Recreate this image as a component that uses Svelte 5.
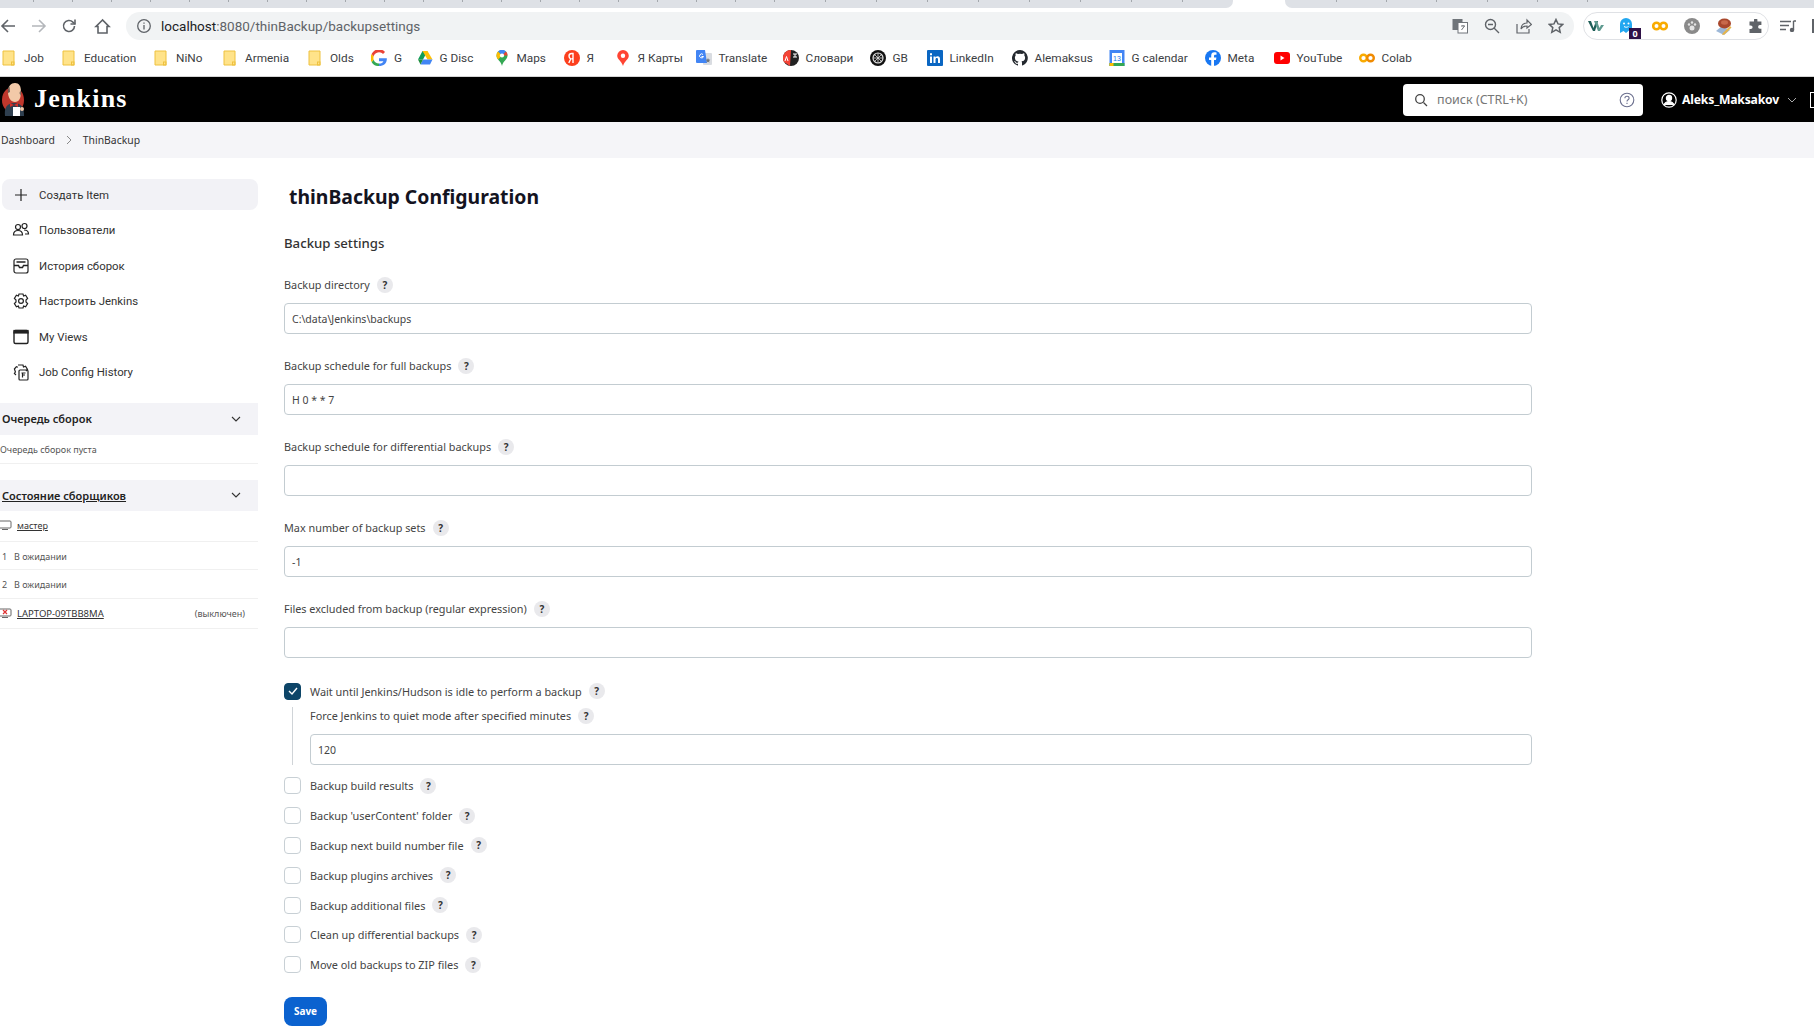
<script>
  const bookmarks = [
    { name: "Job", icon: "folder", w: 60 },
    { name: "Education", icon: "folder", w: 92 },
    { name: "NiNo", icon: "folder", w: 69 },
    { name: "Armenia", icon: "folder", w: 85 },
    { name: "Olds", icon: "folder", w: 64 },
    { name: "G", icon: "google", w: 45.5 },
    { name: "G Disc", icon: "drive", w: 77 },
    { name: "Maps", icon: "maps", w: 70 },
    { name: "Я", icon: "ya", w: 51 },
    { name: "Я Карты", icon: "yamaps", w: 81 },
    { name: "Translate", icon: "translate", w: 87 },
    { name: "Словари", icon: "dict", w: 87 },
    { name: "GB", icon: "gb", w: 57 },
    { name: "LinkedIn", icon: "linkedin", w: 85 },
    { name: "Alemaksus", icon: "github", w: 97 },
    { name: "G calendar", icon: "calendar", w: 96 },
    { name: "Meta", icon: "facebook", w: 69 },
    { name: "YouTube", icon: "youtube", w: 85 },
    { name: "Colab", icon: "colab", w: 60 }
  ];

  const fields = [
    { label: "Backup directory", value: "C:\\data\\Jenkins\\backups" },
    { label: "Backup schedule for full backups", value: "H 0 * * 7" },
    { label: "Backup schedule for differential backups", value: "" },
    { label: "Max number of backup sets", value: "-1" },
    { label: "Files excluded from backup (regular expression)", value: "" }
  ];

  const options = [
    "Backup build results",
    "Backup 'userContent' folder",
    "Backup next build number file",
    "Backup plugins archives",
    "Backup additional files",
    "Clean up differential backups",
    "Move old backups to ZIP files"
  ];

  const tasks = [
    "Создать Item",
    "Пользователи",
    "История сборок",
    "Настроить Jenkins",
    "My Views",
    "Job Config History"
  ];

  // little separators in the squeezed tab strip
  const ticksLeft = [];
  for (let x = 33; x <= 774; x += 39) ticksLeft.push(x);
  for (let x = 825; x <= 1182; x += 51) ticksLeft.push(x);
  const ticksRight = [];
  for (let x = 1336; x <= 1637; x += 50.2) ticksRight.push(x - 1285);
</script>

<div class="tabstrip">
  <div class="tabs-left">
    {#each ticksLeft as t, i}
      <i class="tick" style="margin-left: {i == 0 ? t : t - ticksLeft[i - 1] - 1}px"></i>
    {/each}
  </div>
  <div class="tabs-right">
    {#each ticksRight as t, i}
      <i class="tick" style="margin-left: {i == 0 ? t : t - ticksRight[i - 1] - 1}px"></i>
    {/each}
  </div>
</div>

<div class="toolbar">
  <div class="nav">
    <svg width="16" height="16" viewBox="0 0 16 16" fill="none" stroke="#5f6368" stroke-width="1.6"><path d="M15 8H2M8 2 2 8l6 6" /></svg>
    <svg class="fwd" width="16" height="16" viewBox="0 0 16 16" fill="none" stroke="#b4b7bb" stroke-width="1.6"><path d="M1 8h13M8 2l6 6-6 6" /></svg>
    <svg class="reload" width="16" height="16" viewBox="0 0 16 16" fill="none" stroke="#5f6368" stroke-width="1.6"><path d="M13.5 8a5.5 5.5 0 1 1-1.6-3.9L14 6" /><path d="M14 1.5V6H9.5" /></svg>
    <svg class="home" width="17" height="17" viewBox="0 0 17 17" fill="none" stroke="#5f6368" stroke-width="1.6"><path d="M8.5 2 2 8.5h2v6.5h9V8.5h2z" /></svg>
  </div>
  <div class="omnibox">
    <svg width="16" height="16" viewBox="0 0 16 16" fill="none" stroke="#5f6368" stroke-width="1.3"><circle cx="8" cy="8" r="6.3" /><path d="M8 7v4.500M8 4.400v1.300" /></svg>
    <span class="url"><b>localhost</b>:8080/thinBackup/backupsettings</span>
    <div class="omni-actions">
      <svg width="16" height="16" viewBox="0 0 16 16"><rect x="0.5" y="1" width="10" height="11" fill="#70757a" /><rect x="6" y="4.5" width="9.5" height="10.5" fill="#fff" stroke="#70757a" /><path d="M9 8h4M11 7v1M9.500 12l3-4" stroke="#70757a" fill="none" /></svg>
      <svg width="16" height="16" viewBox="0 0 16 16" fill="none" stroke="#5f6368" stroke-width="1.4"><circle cx="6.5" cy="6.5" r="5" /><path d="m10 10 5 5M4 6.500h5" /></svg>
      <svg width="16" height="16" viewBox="0 0 16 16" fill="none" stroke="#5f6368" stroke-width="1.2"><path d="M1 6v9h12v-4" /><path d="M5 11c0-4 3-6 6-6V2l4.500 4.500L11 10V8C8 8 6 9 5 11z" /></svg>
      <svg width="16" height="16" viewBox="0 0 16 16" fill="none" stroke="#5f6368" stroke-width="1.5"><path d="m8 1.500 2 4.400 4.800.5-3.600 3.200 1 4.700L8 11.900l-4.200 2.400 1-4.700L1.200 6.400 6 5.900z" /></svg>
    </div>
  </div>
  <div class="extensions">
    <svg width="16" height="10" viewBox="0 0 16 10"><path d="M0 0h3l2.500 7L8 0h2L7 10H5z" fill="#1f5f58" /><path d="M6 0h3l2.500 7L13 4h3l-4 6h-2z" fill="#5f9a90" /></svg>
    <span class="ghost">
      <svg width="12" height="16" viewBox="0 0 12 16"><path d="M0 6a6 6 0 0 1 12 0v8l-3-1.500L6 15l-2.500-2L0 15z" fill="#22a7f0" /><circle cx="4" cy="5.5" r="1" fill="#fff" /><circle cx="8.500" cy="5.500" r="1" fill="#fff" /><path d="M4 8.500c1.500 1 3 1 4.500 0" stroke="#fff" fill="none" /></svg>
      <span class="badge">0</span>
    </span>
    <svg width="16" height="10" viewBox="0 0 16 10" fill="none" stroke="#f9ab00" stroke-width="2.6"><circle cx="4.5" cy="5" r="3.3" /><circle cx="11.5" cy="5" r="3.3" /></svg>
    <svg width="16" height="16" viewBox="0 0 16 16"><circle cx="8" cy="8" r="8" fill="#8a8a8a" /><circle cx="8" cy="10" r="2.5" fill="#e4e4e4" /><circle cx="5" cy="6.500" r="1.200" fill="#e4e4e4" /><circle cx="8" cy="4.500" r="1.200" fill="#e4e4e4" /><circle cx="11" cy="6.500" r="1.200" fill="#e4e4e4" /></svg>
    <svg width="16" height="17" viewBox="0 0 16 17"><path d="M0 13 6 8l8 4-6 5z" fill="#9db8d8" /><ellipse cx="8.5" cy="5.500" rx="6.500" ry="5" fill="#a8472c" /><ellipse cx="8.500" cy="4.500" rx="3.500" ry="2.200" fill="#c8694a" /><path d="m7 15 7-7 1.500 1.500-7 7L6 17z" fill="#e8b54a" /></svg>
    <svg width="16" height="15" viewBox="0 0 15 15"><path d="M5.500 1a1.700 1.700 0 0 1 3.400 0v1.500h4v3.600h-1.500a1.800 1.800 0 0 0 0 3.600h1.500v4.300H1V10h1.300a1.800 1.800 0 0 0 0-3.600H1V2.500h4.500z" fill="#5f6368" /></svg>
  </div>
  <div class="toolbar-end">
    <svg width="16" height="12" viewBox="0 0 16 12" fill="none" stroke="#5f6368" stroke-width="1.4"><path d="M0 1.500h11M0 5.500h9M0 9.500h6M13.500 1v9M13.500 1H16" /><circle cx="12" cy="10" r="1.500" fill="#5f6368" /></svg>
    <div class="sidepanel"></div>
  </div>
</div>

<div class="bookmarks">
  {#each bookmarks as b}
    <div class="bookmark" style="width: {b.w}px">
      <svg width="16" height="16" viewBox="0 0 16 16">
        {#if b.icon == "folder"}
          <path d="M2 1h11v14H2z" fill="#ffe38a" stroke="#eec13f" />
          <rect x="10.500" y="12" width="2.500" height="3" fill="none" stroke="#eec13f" />
        {:else if b.icon == "google"}
          <path d="M15.800 8.200H8v3h4.400c-.5 1.400-2 2.400-4.400 2.400V16c4.800 0 8.200-3 7.800-7.800z" fill="#4285f4" />
          <path d="M8 13.600A5.600 5.600 0 0 1 2.700 9.800L.6 11.900A8 8 0 0 0 8 16z" fill="#34a853" />
          <path d="M2.700 9.800a5.600 5.600 0 0 1 0-3.600L.6 4.100a8 8 0 0 0 0 7.800z" fill="#fbbc05" />
          <path d="M2.700 6.200A5.600 5.600 0 0 1 12 4l2-2A8 8 0 0 0 .6 4.100z" fill="#ea4335" />
        {:else if b.icon == "drive"}
          <path d="M5.500 1h5L6 9.500H1z" fill="#0f9d58" />
          <path d="M5.500 1h5l5 8.500h-5z" fill="#ffc107" />
          <path d="M3.500 14.500 6 9.500h9.500l-2.500 5z" fill="#4285f4" />
          <path d="M1 9.500h5l-2.500 5z" fill="#1e8e3e" />
        {:else if b.icon == "maps"}
          <path d="M8 0a5.500 5.500 0 0 1 5.500 5.500C13.500 9.500 9 11 8 16 7 11 2.500 9.500 2.500 5.500A5.500 5.500 0 0 1 8 0z" fill="#34a853" />
          <path d="M4 1.600A5.500 5.500 0 0 1 12 1.600L8 5.500z" fill="#4285f4" />
          <path d="M2.500 5.500c0-1.500.5-3 1.500-3.900l4 3.900-4 4c-1-1.200-1.500-2.500-1.500-4z" fill="#fbbc05" />
          <path d="M12 1.600a5.500 5.500 0 0 1 1.500 3.900L8 5.500z" fill="#ea4335" />
          <circle cx="8" cy="5.5" r="2.1" fill="#fff" />
        {:else if b.icon == "ya"}
          <circle cx="8" cy="8" r="8" fill="#fc3f1d" />
          <path d="M9 13V3.500H7.800C6 3.500 5 4.600 5 6.100 5 7.400 5.600 8.200 6.700 9L4.800 13M9 8.700H7.500" fill="none" stroke="#fff" stroke-width="1.4" />
        {:else if b.icon == "yamaps"}
          <path d="M8 0a5.800 5.800 0 0 1 5.800 5.800C13.800 9.500 9.500 11 8 16 6.500 11 2.200 9.500 2.200 5.800A5.800 5.800 0 0 1 8 0z" fill="#f43" />
          <circle cx="8" cy="5.8" r="2.2" fill="#fff" />
        {:else if b.icon == "translate"}
          <rect x="7" y="3" width="9" height="12" rx="1" fill="#d9dce1" />
          <path d="M1 0h8l2 13H1a1 1 0 0 1-1-1V1a1 1 0 0 1 1-1z" fill="#4285f4" />
          <path d="M7 4.500a2 2 0 1 0 .5 2H5.500" stroke="#fff" fill="none" />
          <path d="m12 8 .7 1.600 1.600.2-1.200 1.100.4 1.700-1.500-.9-1.500.9.4-1.700-1.200-1.100 1.600-.2z" fill="#70757a" />
        {:else if b.icon == "dict"}
          <circle cx="8" cy="8" r="8" fill="#222" />
          <path d="M8 0a8 8 0 0 0-7 12l6 3.900z" fill="#f44336" />
          <path d="M5 11 3.500 6.500 2 11" stroke="#fff" fill="none" />
          <path d="M10 4h4M12 4v3M10 7h4" stroke="#fff" fill="none" />
        {:else if b.icon == "gb"}
          <circle cx="8" cy="8" r="8" fill="#111" />
          <circle cx="8" cy="8" r="5" fill="none" stroke="#ddd" stroke-width="1.2" />
          <path d="M5 5l6 6M11 5l-6 6M8 3v10M3 8h10" stroke="#ddd" stroke-width=".8" />
        {:else if b.icon == "linkedin"}
          <rect width="16" height="16" rx="1" fill="#0a66c2" />
          <path d="M3 6.500h2V13H3zM3 3.200h2v2H3zM6.500 6.500h2v1c.5-.8 1.300-1.200 2.200-1.200 1.700 0 2.300 1.100 2.300 2.800V13h-2V9.500c0-.9-.3-1.500-1.200-1.500S8.500 8.600 8.500 9.500V13h-2z" fill="#fff" />
        {:else if b.icon == "github"}
          <path d="M8 0a8 8 0 0 0-2.500 15.600c.4.100.5-.2.500-.4v-1.400c-2.200.5-2.700-1-2.700-1-.4-.9-.9-1.200-.9-1.200-.7-.5.100-.5.100-.5.800.1 1.200.8 1.200.8.700 1.200 1.900.9 2.300.7.100-.5.300-.9.500-1.100-1.800-.2-3.600-.9-3.600-4 0-.9.300-1.600.8-2.100-.1-.2-.4-1 .1-2.100 0 0 .7-.2 2.200.8a7.600 7.600 0 0 1 4 0c1.500-1 2.200-.8 2.200-.8.400 1.100.2 1.900.1 2.100.5.600.8 1.300.8 2.100 0 3.100-1.900 3.700-3.600 3.900.3.200.5.700.5 1.500v2.200c0 .2.100.5.600.4A8 8 0 0 0 8 0z" fill="#24292f" />
        {:else if b.icon == "calendar"}
          <rect x="0.5" width="15" height="16" fill="#4285f4" />
          <rect x="3" y="3" width="10" height="10" fill="#fff" />
          <rect x="0.5" y="13" width="15" height="3" fill="#34a853" />
          <rect x="0.5" y="13" width="4" height="3" fill="#fbbc05" />
          <text x="8" y="11" font-size="7" text-anchor="middle" fill="#1a73e8" font-family="Liberation Sans">13</text>
        {:else if b.icon == "facebook"}
          <circle cx="8" cy="8" r="8" fill="#1877f2" />
          <path d="M9 16v-6h2l.4-2.500H9V6c0-.7.300-1.300 1.400-1.300h1.100V2.500C10.500 2.300 9.800 2.200 9.300 2.200 7.300 2.200 6.200 3.400 6.200 5.500v2H4V10h2.200v6z" fill="#fff" />
        {:else if b.icon == "youtube"}
          <rect y="2" width="16" height="12" rx="3" fill="#f00" />
          <path d="m6.500 5.500 4 2.500-4 2.500z" fill="#fff" />
        {:else if b.icon == "colab"}
          <circle cx="4.5" cy="8" r="3.3" fill="none" stroke="#f9ab00" stroke-width="2.4" />
          <circle cx="11.5" cy="8" r="3.3" fill="none" stroke="#f08a00" stroke-width="2.4" />
        {/if}
      </svg>
      <span>{b.name}</span>
    </div>
  {/each}
</div>

<header class="jenkins-header">
  <div class="brand">
    <svg class="butler" width="24" height="34" viewBox="0 0 24 34">
      <ellipse cx="11" cy="17" rx="11" ry="13" fill="#c0372c" />
      <path d="M3 33c-1-8 2-13 9-13s10 4 10 12v1z" fill="#2f3f4f" />
      <path d="M6 9c0-6 3-9 7-9s6 3 6 9c0 6-2 10-6 10S6 15 6 9z" fill="#f2c9a8" />
      <path d="M6 10c-.5-3 0-5 1.500-6.500L8 9zM18.500 7c.5 2 .5 4 0 6l-1-3z" fill="#6b5a52" />
      <path d="M8 20l4 2 4-2v4l-4-2-4 2z" fill="#d3302a" />
      <path d="M11 24h7v9h-7z" fill="#fff" />
      <circle cx="20" cy="26" r="2" fill="#f2c9a8" />
    </svg>
    <span class="wordmark">Jenkins</span>
  </div>
  <div class="header-right">
    <div class="search">
      <svg width="14" height="14" viewBox="0 0 14 14" fill="none" stroke="#444" stroke-width="1.3"><circle cx="6" cy="6" r="4.3" /><path d="m9.500 9.500 3.500 3.500" /></svg>
      <span class="search-text">поиск (CTRL+K)</span>
      <svg class="search-help" width="16" height="16" viewBox="0 0 16 16" fill="none" stroke="#6b6f8e" stroke-width="1.1"><circle cx="8" cy="8" r="6.800" /><path d="M5.900 6.300C5.900 5 6.900 4.300 8 4.300s2.100.7 2.100 1.900c0 1.600-2.100 1.500-2.100 3.200M8 10.800v1.200" /></svg>
    </div>
    <div class="user">
      <svg width="16" height="16" viewBox="0 0 16 16" fill="none" stroke="#fff" stroke-width="1.2"><circle cx="8" cy="8" r="7.2" /><circle cx="8" cy="6" r="2.6" fill="#fff" /><path d="M3 13c1-3 3-3.500 5-3.500s4 .5 5 3.500" fill="#fff" /></svg>
      <span>Aleks_Maksakov</span>
      <svg width="10" height="6" viewBox="0 0 10 6" fill="none" stroke="#aaa" stroke-width="1"><path d="m1 1 4 4 4-4" /></svg>
    </div>
    <div class="logout"></div>
  </div>
</header>

<nav class="breadcrumbs">
  <span>Dashboard</span>
  <svg width="8" height="10" viewBox="0 0 8 10" fill="none" stroke="#888" stroke-width="1"><path d="m2 1 4 4-4 4" /></svg>
  <span>ThinBackup</span>
</nav>

<div class="page">
  <aside class="side">
    <ul class="tasks">
      {#each tasks as t, i}
        <li class:active={i == 0}>
          <svg width="18" height="18" viewBox="0 0 18 18" fill="none" stroke="#222" stroke-width="1.2">
            {#if i == 0}
              <path d="M9 3v12M3 9h12" />
            {:else if i == 1}
              <circle cx="6" cy="6" r="2.5" /><circle cx="12.5" cy="5" r="2.500" />
              <path d="M1.500 14c0-3 2-4.500 4.500-4.500S10.500 11 10.500 14zM12 9c2.500 0 4.500 1.500 4.500 4h-3.500" />
            {:else if i == 2}
              <rect x="2" y="2" width="14" height="14" rx="2" />
              <path d="M4.500 5h9M2 8.500h4.500l1 2h3l1-2H16" stroke-width="1.4" />
            {:else if i == 3}
              <path d="M7 2h4l.6 2 2-.8 2 3.300-1.600 1.500v2l1.600 1.500-2 3.300-2-.8L11 16H7l-.6-2-2 .8-2-3.300L4 10V8L2.400 6.500l2-3.300 2 .8z" />
              <circle cx="9" cy="9" r="2.4" />
            {:else if i == 4}
              <rect x="2" y="2.5" width="14" height="13" rx="1.5" stroke-width="1.4" />
              <rect x="2" y="2.5" width="14" height="2.5" fill="#222" />
            {:else}
              <path d="M6 2h5l.5 2 2-.8 2 3.300-1.600 1.500M4 12l-1.600-1.500 1-1.500-1-3 2-2.300 1.500.6" />
              <rect x="7" y="7" width="9" height="10" rx="1" />
              <path d="M9.500 10h4M10.500 10v4.500M10.500 12h2.500" />
            {/if}
          </svg>
          <span>{t}</span>
        </li>
      {/each}
    </ul>

    <section class="pane queue">
      <div class="pane-head">
        <span>Очередь сборок</span>
        <svg width="10" height="6" viewBox="0 0 10 6" fill="none" stroke="#333" stroke-width="1.1"><path d="m1 1 4 4 4-4" /></svg>
      </div>
      <div class="pane-row empty">Очередь сборок пуста</div>
    </section>

    <section class="pane executors">
      <div class="pane-head">
        <u>Состояние сборщиков</u>
        <svg width="10" height="6" viewBox="0 0 10 6" fill="none" stroke="#333" stroke-width="1.1"><path d="m1 1 4 4 4-4" /></svg>
      </div>
      <div class="pane-row node">
        <svg width="12" height="11" viewBox="0 0 12 11"><rect x="-2" y="1" width="13" height="7" rx="1" fill="#fff" stroke="#666" /><path d="M2 9h6v1H2z" fill="#666" /></svg>
        <u>мастер</u>
      </div>
      <div class="pane-row slot"><span class="num">1</span>В ожидании</div>
      <div class="pane-row slot"><span class="num">2</span>В ожидании</div>
      <div class="pane-row node laptop">
        <svg width="12" height="11" viewBox="0 0 12 11"><rect x="-2" y="1" width="13" height="7" rx="1" fill="#fff" stroke="#666" /><path d="M2 9h6v1H2z" fill="#666" /><path d="m3 2 4 4M7 2 3 6" stroke="#d33" stroke-width="1.2" /></svg>
        <u>LAPTOP-09TBB8MA</u>
        <span class="offline">(выключен)</span>
      </div>
    </section>
  </aside>

  <main class="main">
    <h1>thinBackup Configuration</h1>
    <h2>Backup settings</h2>

    {#each fields as f}
      <div class="field">
        <div class="label">{f.label} <span class="help">?</span></div>
        <div class="input">{f.value}</div>
      </div>
    {/each}

    <div class="option wait">
      <span class="check on">
        <svg width="10" height="8" viewBox="0 0 10 8" fill="none" stroke="#fff" stroke-width="1.4"><path d="m1 4 3 3 5-6" /></svg>
      </span>
      <span>Wait until Jenkins/Hudson is idle to perform a backup</span>
      <span class="help">?</span>
    </div>
    <div class="nested">
      <div class="label">Force Jenkins to quiet mode after specified minutes <span class="help">?</span></div>
      <div class="input">120</div>
    </div>

    {#each options as o}
      <div class="option">
        <span class="check"></span>
        <span>{o}</span>
        <span class="help">?</span>
      </div>
    {/each}

    <button class="save">Save</button>
  </main>
</div>

<style>
  :global(body) {
    margin: 0;
    background: #fff;
    overflow: hidden;
    font-family: "Noto Sans", "Open Sans", sans-serif;
    color: #333;
  }
  svg {
    display: block;
    flex: none;
  }
  .tabstrip {
    height: 8px;
    display: flex;
    justify-content: space-between;
  }
  .tabs-left,
  .tabs-right {
    height: 8px;
    background: #dee1e6;
    display: flex;
    align-items: flex-start;
  }
  .tabs-left {
    width: 1233px;
    border-bottom-right-radius: 7px;
  }
  .tabs-right {
    width: 529px;
    border-bottom-left-radius: 7px;
  }
  .tick {
    width: 1px;
    height: 2px;
    background: #a4a8ad;
    flex: none;
  }
  .toolbar {
    height: 28px;
    padding: 4px 0 0 0;
    display: flex;
    align-items: center;
  }
  .nav {
    display: flex;
    align-items: center;
    width: 126px;
  }
  .nav .fwd {
    margin-left: 15px;
  }
  .nav .reload {
    margin-left: 14px;
  }
  .nav .home {
    margin-left: 17px;
  }
  .omnibox {
    width: 1448px;
    height: 28px;
    box-sizing: border-box;
    background: #f1f3f4;
    border-radius: 14px;
    display: flex;
    align-items: center;
    padding-left: 10px;
    font-family: Roboto, sans-serif;
    font-size: 13.5px;
    color: #5f6368;
  }
  .url {
    margin-left: 9px;
  }
  .url b {
    font-weight: 400;
    color: #202124;
  }
  .omni-actions {
    margin-left: auto;
    display: flex;
    gap: 16px;
    padding-right: 10px;
  }
  .extensions {
    margin-left: 9px;
    width: 186px;
    height: 28px;
    box-sizing: border-box;
    border: 1px solid #dfe1e5;
    border-radius: 14px;
    display: flex;
    align-items: center;
    gap: 16px;
    padding-left: 4px;
  }
  .ghost {
    position: relative;
    width: 16px;
    display: flex;
    justify-content: center;
  }
  .ghost svg {
    margin-left: -4px;
  }
  .badge {
    position: absolute;
    left: 9px;
    top: 10px;
    width: 12px;
    height: 11px;
    background: #2e1147;
    color: #fff;
    font-size: 9px;
    font-weight: 700;
    line-height: 11px;
    text-align: center;
  }
  .toolbar-end {
    display: flex;
    align-items: center;
    margin-left: 11px;
    gap: 16px;
  }
  .sidepanel {
    width: 2px;
    height: 14px;
    background: #5f6368;
  }
  .bookmarks {
    height: 36px;
    display: flex;
    align-items: center;
    padding-left: 1px;
    border-bottom: 1px solid #d5d5d5;
    font-family: Roboto, sans-serif;
    font-size: 11.8px;
    color: #3c4043;
  }
  .bookmark {
    display: flex;
    align-items: center;
    gap: 7px;
    flex: none;
    white-space: nowrap;
  }
  .jenkins-header {
    height: 45px;
    background: #000;
    display: flex;
    align-items: center;
    justify-content: space-between;
  }
  .brand {
    display: flex;
    align-items: center;
    gap: 8px;
    padding-left: 2px;
  }
  .wordmark {
    font-family: "Liberation Serif", serif;
    font-weight: 700;
    font-size: 26px;
    letter-spacing: 1.2px;
    padding-bottom: 2px;
    color: #fff;
  }
  .header-right {
    display: flex;
    align-items: center;
  }
  .search {
    width: 240px;
    height: 32px;
    box-sizing: border-box;
    background: #fff;
    border-radius: 4px;
    display: flex;
    align-items: center;
    padding: 0 8px 0 11px;
    font-size: 12.5px;
    color: #777;
  }
  .search-text {
    margin-left: 9px;
  }
  .search-help {
    margin-left: auto;
  }
  .user {
    margin-left: 18px;
    display: flex;
    align-items: center;
    gap: 5px;
    color: #fff;
    font-size: 12.2px;
    font-weight: 700;
    letter-spacing: -0.2px;
  }
  .user svg:last-child {
    margin-left: 3px;
  }
  .logout {
    width: 3px;
    height: 14px;
    margin-left: 13px;
    border: 1px solid #fff;
    border-right: 0;
  }
  .breadcrumbs {
    height: 36px;
    background: #f5f5f8;
    display: flex;
    align-items: center;
    gap: 10px;
    padding-left: 1px;
    font-size: 10.4px;
    color: #333;
  }
  .page {
    display: flex;
  }
  .side {
    width: 258px;
    flex: none;
    padding-top: 21px;
  }
  .tasks {
    list-style: none;
    margin: 0 0 0 2px;
    padding: 0;
    font-family: Roboto, sans-serif;
    font-size: 11.4px;
    color: #333;
  }
  .tasks li {
    height: 31px;
    margin-bottom: 4.6px;
    display: flex;
    align-items: center;
    gap: 9px;
    padding-left: 10px;
    border-radius: 8px;
  }
  .tasks li.active {
    background: #f2f2f6;
  }
  .pane {
    font-size: 9px;
  }
  .queue {
    margin-top: 15px;
  }
  .pane-head {
    height: 32px;
    background: #f3f3f7;
    display: flex;
    align-items: center;
    justify-content: space-between;
    padding: 0 17px 0 2px;
    font-size: 11px;
    font-weight: 600;
    color: #222;
  }
  .pane-row {
    border-bottom: 1px solid #f0f0f0;
    display: flex;
    align-items: center;
    color: #555;
    box-sizing: border-box;
  }
  .empty {
    height: 29px;
    padding-top: 1px;
  }
  .executors {
    margin-top: 16px;
  }
  .executors .pane-head {
    height: 31px;
  }
  .node {
    height: 31px;
    gap: 5px;
    color: #333;
  }
  .slot {
    height: 28.5px;
    padding-top: 1px;
  }
  .num {
    padding-left: 2px;
    width: 12px;
  }
  .laptop {
    height: 30px;
    font-size: 9.5px;
  }
  .offline {
    margin-left: auto;
    padding-right: 13px;
    font-size: 9px;
    color: #555;
  }
  .main {
    width: 1248px;
    margin-left: 26px;
    padding-top: 25px;
  }
  h1 {
    margin: 0 0 0 5px;
    font-size: 19.4px;
    line-height: 28px;
    font-weight: 700;
    color: #14141f;
  }
  h2 {
    margin: 23px 0 24px;
    font-size: 13.2px;
    line-height: 18px;
    font-weight: 500;
    color: #333;
  }
  .label {
    font-size: 10.85px;
    line-height: 17px;
    color: #444;
    display: flex;
    align-items: center;
    gap: 7px;
  }
  .field {
    height: 81px;
  }
  .input {
    height: 31px;
    box-sizing: border-box;
    border: 1px solid #c3ccd1;
    border-radius: 4px;
    margin-top: 10px;
    padding-left: 7px;
    font-size: 10.5px;
    line-height: 30px;
    color: #444;
  }
  .help {
    width: 16px;
    height: 16px;
    border-radius: 50%;
    background: #e9e9ec;
    font-size: 10px;
    font-weight: 700;
    line-height: 16px;
    text-align: center;
    color: #333;
    flex: none;
  }
  .option {
    height: 29.8px;
    display: flex;
    align-items: center;
    gap: 9px;
    font-size: 10.9px;
    color: #444;
  }
  .option .help {
    margin-left: -2px;
  }
  .wait {
    height: 18px;
    margin-top: 1px;
  }
  .check {
    width: 17px;
    height: 17px;
    box-sizing: border-box;
    border: 1.5px solid #c8d0d5;
    border-radius: 4px;
    display: flex;
    align-items: center;
    justify-content: center;
    flex: none;
  }
  .check.on {
    background: #0d4568;
    border-color: #0d4568;
  }
  .nested {
    margin: 7px 0 6px 8px;
    padding-left: 17px;
    border-left: 1px solid #d0d4d8;
  }
  .nested .input {
    margin-top: 10px;
  }
  .save {
    display: block;
    width: 43px;
    height: 29px;
    margin-top: 17px;
    padding: 0;
    border: 0;
    border-radius: 8px;
    background: #0b62cf;
    color: #fff;
    font-family: inherit;
    font-size: 10px;
    font-weight: 700;
  }
</style>
